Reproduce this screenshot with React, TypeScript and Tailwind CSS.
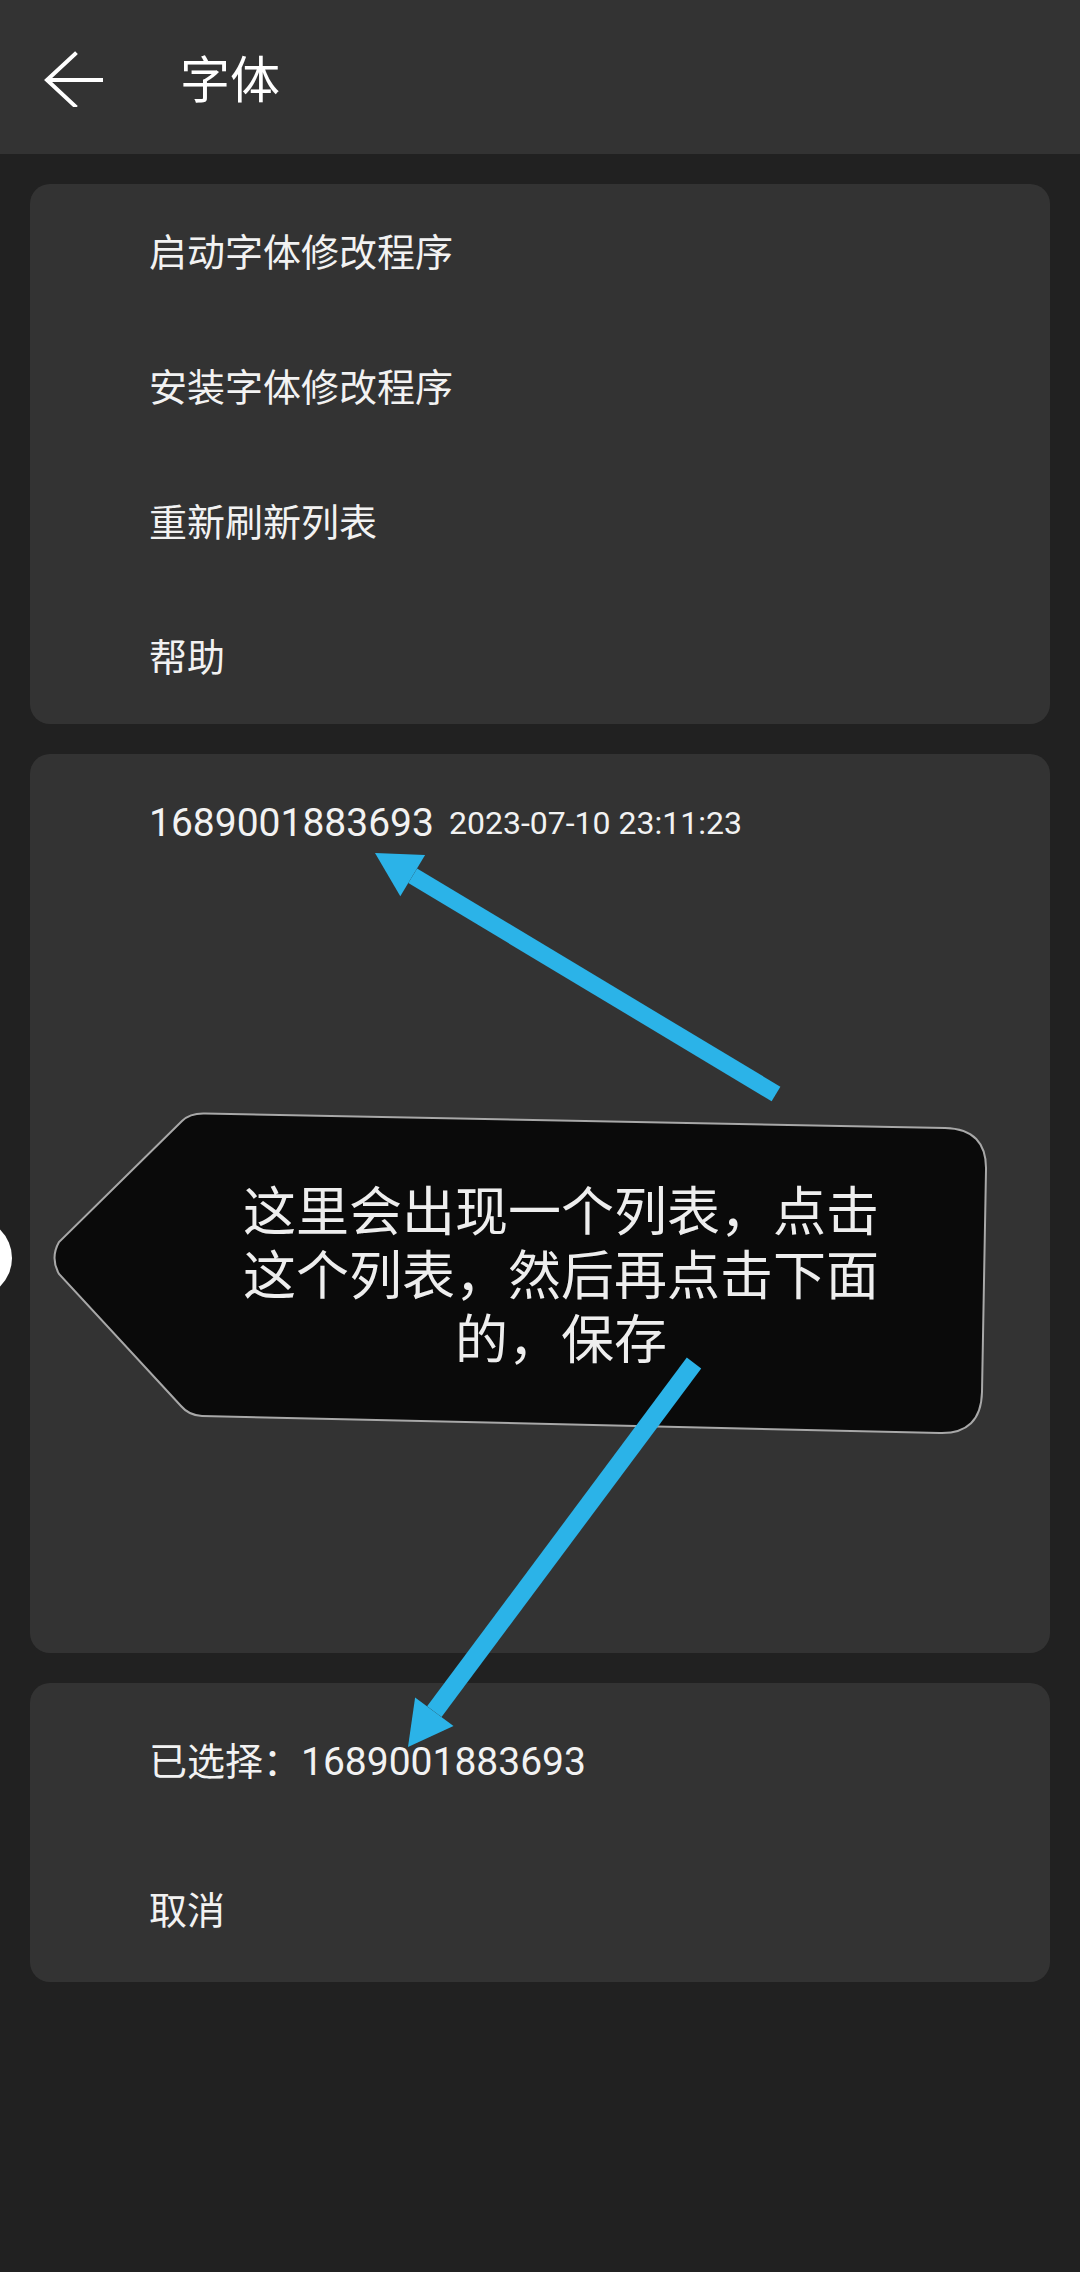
import React from "react";

const Row = ({ children, h }: { children: React.ReactNode; h: string }) => (
  <div className={`flex items-center pl-[119px] pt-[4px] text-[38px] text-[#f2f2f2] ${h}`}>{children}</div>
);

export default function App() {
  return (
    <div className="relative w-[1080px] h-[2272px] overflow-hidden bg-[#212121] font-['Roboto','Noto_Sans_CJK_SC',sans-serif]">
      <header className="flex h-[154px] items-center bg-[#333333] pt-[3px]">
        <svg className="ml-[42px]" width="64" height="56" viewBox="0 0 64 56" fill="none">
          <polyline points="33,3 5,29 33,55" stroke="#ffffff" strokeWidth="4" strokeLinecap="square" strokeLinejoin="miter" />
          <line x1="6" y1="29" x2="61" y2="29" stroke="#ffffff" strokeWidth="4" />
        </svg>
        <span className="ml-[74px] pt-[4px] text-[50px] leading-none text-white">字体</span>
      </header>

      <main className="flex flex-col gap-[30px] px-[30px] pt-[30px]">
        <section className="flex flex-col rounded-[20px] bg-[#333333]">
          <Row h="h-[135px]">启动字体修改程序</Row>
          <Row h="h-[135px]">安装字体修改程序</Row>
          <Row h="h-[135px]">重新刷新列表</Row>
          <Row h="h-[135px]">帮助</Row>
        </section>

        <section className="flex h-[899px] flex-col rounded-[20px] bg-[#333333]">
          <Row h="h-[134px]">
            <span className="text-[39px]">1689001883693</span>
            <span className="ml-[15px] text-[32px]">2023-07-10 23:11:23</span>
          </Row>
        </section>

        <section className="flex h-[299px] flex-col rounded-[20px] bg-[#333333]">
          <Row h="h-[154px]">
            <span>已选择：</span>
            <span className="text-[39px]">1689001883693</span>
          </Row>
          <Row h="h-[145px]">取消</Row>
        </section>
      </main>

      <svg
        className="pointer-events-none absolute left-0 top-0"
        width="1080"
        height="2272"
        viewBox="0 0 1080 2272"
      >
        <circle cx="-28" cy="1258" r="40" fill="#ffffff" />
        <path
          d="M 205 1113.5 L 945 1128 Q 987 1129 986 1170 L 982 1392 Q 981 1434 940 1433 L 202 1416 Q 189 1415.5 181 1406 L 59 1274 Q 50 1258 59 1242 L 182 1121 Q 190 1113 205 1113.5 Z"
          fill="#0a0a0a"
          stroke="#a8a8a8"
          strokeWidth="2"
        />
        <line x1="412.7" y1="875.7" x2="776" y2="1094" stroke="#2bb3e8" strokeWidth="17" />
        <polygon points="375,853 425.1,855.1 400.3,896.3" fill="#2bb3e8" />
        <line x1="434.3" y1="1711.7" x2="694" y2="1363" stroke="#2bb3e8" strokeWidth="18" />
        <polygon points="408,1747 453.5,1726 415.1,1697.4" fill="#2bb3e8" />
      </svg>

      <div className="pointer-events-none absolute left-[230px] top-[1176px] w-[662px] text-center text-[53px] leading-[64px] text-[#eeeeee] font-['Noto_Sans_CJK_SC',sans-serif]">
        <div>这里会出现一个列表，点击</div>
        <div>这个列表，然后再点击下面</div>
        <div>的，保存</div>
      </div>
    </div>
  );
}
